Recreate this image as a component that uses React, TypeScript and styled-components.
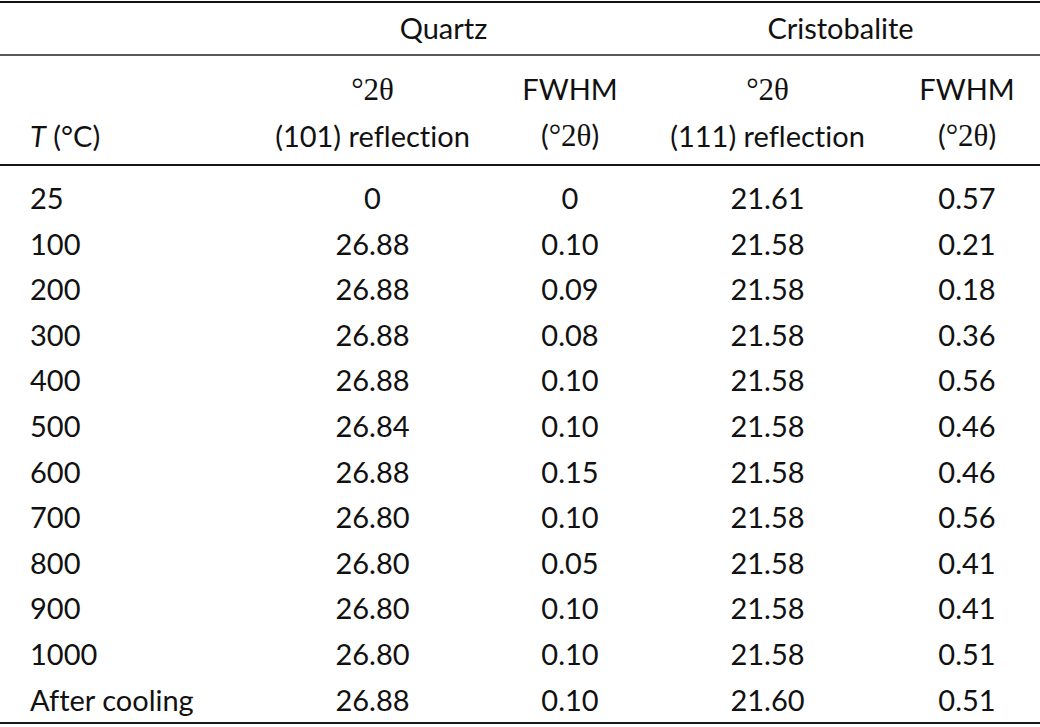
import React from "react";
import styled, { createGlobalStyle } from "styled-components";

const Global = createGlobalStyle`
  html, body {
    margin: 0;
    padding: 0;
    background: #ffffff;
  }
  body {
    font-family: Lato, "Noto Sans", sans-serif;
    color: #111111;
    font-variant-ligatures: none;
  }
`;

const Page = styled.div`
  width: 1040px;
  padding-top: 1px;
`;

const Table = styled.table`
  width: 1040px;
  table-layout: fixed;
  border-collapse: collapse;
  border-top: 2px solid #111111;
  border-bottom: 2px solid #1a1a1a;
  font-size: 29px;
  font-variant-ligatures: none;
`;

const GroupRow = styled.tr`
  height: 53px;
  border-bottom: 2px solid #5a5a5a;
`;

const GroupCell = styled.th`
  font-weight: 400;
  text-align: center;
  vertical-align: middle;
  padding: 0 0 2px;
  line-height: 40px;
`;

const HeadRow = styled.tr`
  border-bottom: 2px solid #161616;
`;

const HeadCell = styled.th<{ $left?: boolean }>`
  font-weight: 400;
  text-align: ${(p) => (p.$left ? "left" : "center")};
  vertical-align: bottom;
  padding: 10px 0 5px ${(p) => (p.$left ? "30px" : "0")};
  line-height: 46px;
`;

const Line = styled.div`
  white-space: nowrap;
`;

const Math = styled.span`
  font-family: "Liberation Serif", "DejaVu Serif", serif;
  font-size: 31px;
`;

const Italic = styled.i`
  font-style: italic;
`;

const Spacer = styled.tr`
  height: 10px;
`;

const BodyRow = styled.tr`
  height: 45.6px;
`;

const Cell = styled.td<{ $left?: boolean }>`
  text-align: ${(p) => (p.$left ? "left" : "center")};
  vertical-align: middle;
  padding: 0 0 0 ${(p) => (p.$left ? "30px" : "0")};
  line-height: 45.6px;
  white-space: nowrap;
`;

const rows: [string, string, string, string, string][] = [
  ["25", "0", "0", "21.61", "0.57"],
  ["100", "26.88", "0.10", "21.58", "0.21"],
  ["200", "26.88", "0.09", "21.58", "0.18"],
  ["300", "26.88", "0.08", "21.58", "0.36"],
  ["400", "26.88", "0.10", "21.58", "0.56"],
  ["500", "26.84", "0.10", "21.58", "0.46"],
  ["600", "26.88", "0.15", "21.58", "0.46"],
  ["700", "26.80", "0.10", "21.58", "0.56"],
  ["800", "26.80", "0.05", "21.58", "0.41"],
  ["900", "26.80", "0.10", "21.58", "0.41"],
  ["1000", "26.80", "0.10", "21.58", "0.51"],
  ["After cooling", "26.88", "0.10", "21.60", "0.51"],
];

const TwoTheta = () => <Math>°2θ</Math>;

export default function App() {
  return (
    <Page>
      <Global />
      <Table>
        <colgroup>
          <col style={{ width: 246 }} />
          <col style={{ width: 253 }} />
          <col style={{ width: 142 }} />
          <col style={{ width: 253 }} />
          <col style={{ width: 146 }} />
        </colgroup>
        <thead>
          <GroupRow>
            <GroupCell />
            <GroupCell colSpan={2}>Quartz</GroupCell>
            <GroupCell colSpan={2}>Cristobalite</GroupCell>
          </GroupRow>
          <HeadRow>
            <HeadCell $left>
              <Line>
                <Italic>T</Italic> (°C)
              </Line>
            </HeadCell>
            <HeadCell>
              <Line>
                <TwoTheta />
              </Line>
              <Line>(101) reflection</Line>
            </HeadCell>
            <HeadCell>
              <Line>FWHM</Line>
              <Line>
                (<TwoTheta />)
              </Line>
            </HeadCell>
            <HeadCell>
              <Line>
                <TwoTheta />
              </Line>
              <Line>(111) reflection</Line>
            </HeadCell>
            <HeadCell>
              <Line>FWHM</Line>
              <Line>
                (<TwoTheta />)
              </Line>
            </HeadCell>
          </HeadRow>
        </thead>
        <tbody>
          <Spacer />
          {rows.map((r) => (
            <BodyRow key={r[0]}>
              <Cell $left>{r[0]}</Cell>
              <Cell>{r[1]}</Cell>
              <Cell>{r[2]}</Cell>
              <Cell>{r[3]}</Cell>
              <Cell>{r[4]}</Cell>
            </BodyRow>
          ))}
        </tbody>
      </Table>
    </Page>
  );
}
